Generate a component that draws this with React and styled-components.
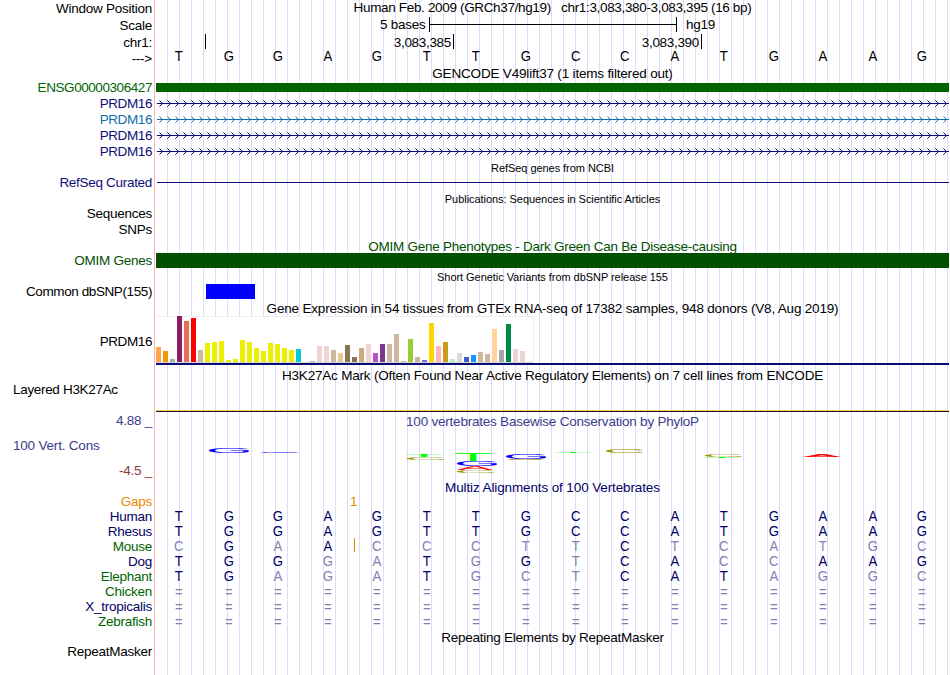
import React from 'react';
import styled, { createGlobalStyle } from 'styled-components';

const GlobalStyle = createGlobalStyle`
  body {
    margin: 0;
    background: #fff;
  }
`

const Browser = styled.div`
  width: 949px;
  height: 675px;
  overflow: hidden;
  font-family: "Liberation Sans", Arial, sans-serif;
  font-size: 13.5px;
  letter-spacing: -0.25px;
  line-height: 15px;
  color: #000;
  white-space: pre;
`

const Row = styled.div`
  display: grid;
  grid-template-columns: 154px 1px 1fr;
  height: ${p => p.$h}px;
`

const Side = styled.div`
  display: flex;
  flex-direction: column;
  padding: ${p => p.$top || 0}px 2px 0 13px;
`

const Label = styled.div`
  color: ${p => p.$color || '#000'};
  align-self: ${p => (p.$left ? 'flex-start' : 'flex-end')};
  margin-bottom: ${p => p.$gap || 0}px;
  letter-spacing: ${p => p.$spacing || -0.25}px;
`

const Divider = styled.div`
  background: #ffb4b4;
`

const Data = styled.div`
  margin-left: 1px;
  min-width: 0;
  background-image: linear-gradient(to right, #dcdcff 1px, transparent 1px);
  background-size: 12px 100%;
  background-position: 11px 0;
`

const Title = styled.div`
  text-align: center;
  color: ${p => p.$color || '#000'};
  padding-top: ${p => p.$top || 0}px;
  letter-spacing: ${p => p.$spacing || -0.25}px;
`

const SmallTitle = styled(Title)`
  padding-top: 1px;
  font-size: 11px;
  letter-spacing: -0.05px;
`

const Bar = styled.div`
  height: ${p => p.$h}px;
  width: ${p => (p.$w ? p.$w + 'px' : 'auto')};
  margin-left: ${p => p.$left || 0}px;
  background: ${p => p.$color};
`

const GeneBar = styled.div`
  padding-top: 3px;
`

const ScaleRow = styled.div`
  display: flex;
  padding-left: 224px;
`

const ScaleText = styled.div`
  width: 49px;
`

const ScaleBar = styled.div`
  display: flex;
  align-items: center;
  width: 246px;
  height: 15px;
  margin-right: 9px;
  border: solid #000;
  border-width: 0 1px;

  &::before {
    content: '';
    flex: 1;
    height: 1px;
    background: #000;
  }
`

const Ruler = styled.div`
  display: flex;
`

const Tick = styled.div`
  width: ${p => p.$w}px;
  height: 15px;
  padding: 1px 2px 0 0;
  box-sizing: border-box;
  border-right: 1px solid #000;
  text-align: right;
  letter-spacing: -0.32px;
`

const Bases = styled.div`
  display: grid;
  grid-template-columns: repeat(16, 1fr);
  margin: 0 2px 0 -2px;
  padding-top: ${p => p.$top || 0}px;
  text-align: center;
  letter-spacing: 0;
`

const Base = styled.span`
  color: ${p => p.$color};
  font-size: 14px;
  transform: scaleX(0.94);
`

const Gap = styled.div`
  width: 4px;
  margin-left: 194px;
  color: #e68a00;
`

const MouseRow = styled.div`
  position: relative;
`

const Insert = styled.div`
  position: absolute;
  left: 198px;
  top: -1px;
  width: 1px;
  height: 14px;
  background: #e68a00;
`

const Drawing = styled.svg`
  display: block;
`

const Histogram = styled.div`
  display: flex;
  align-items: flex-end;
  gap: 2px;
  width: 378px;
  height: 47px;
  box-sizing: border-box;
  background: #fff;
  border: solid #eee;
  border-width: 1px 1px 0 0;
  border-bottom: 1px solid #d3d3d3;
`

const Expression = styled.div`
  padding-top: 1px;
`

const Tissue = styled.div`
  flex: none;
  width: 5px;
  background: ${p => p.$color};
`

const navy = '#0c0c78';
const blue = '#0c6eaa';
const alignNavy = '#000064';
const pale = '#8080b2';
const green = '#006400';
const omim = '#005000';

const tissues = [
  [15, '#ffa54f'], [11, '#ee9a00'], [3, '#8fbc8f'], [46, '#8b1c62'], [41, '#ee6a50'], [44, '#ff0000'],
  [12, '#cdb79e'], [19, '#eeee00'], [20, '#eeee00'], [21, '#eeee00'], [2, '#eeee00'], [3, '#eeee00'],
  [22, '#eeee00'], [20, '#eeee00'], [14, '#eeee00'], [11, '#eeee00'], [19, '#eeee00'], [18, '#eeee00'],
  [14, '#eeee00'], [12, '#eeee00'], [13, '#00cdcd'], [0, '#ee82ee'], [1, '#9ac0cd'], [16, '#eed5d2'],
  [16, '#eed5d2'], [12, '#cdb79e'], [9, '#eec591'], [17, '#8b7355'], [5, '#8b7355'], [14, '#cdaa7d'],
  [18, '#eed5d2'], [9, '#b452cd'], [18, '#7a378b'], [18, '#cdb79e'], [28, '#cdb79e'], [1, '#cdb79e'],
  [23, '#9acd32'], [5, '#cdb79e'], [2, '#7a67ee'], [39, '#ffd700'], [16, '#ffb6c1'], [20, '#cd9b1d'],
  [3, '#b4eeb4'], [9, '#d9d9d9'], [5, '#3a5fcd'], [7, '#1e90ff'], [10, '#cdb79e'], [8, '#cdb79e'],
  [33, '#ffd39b'], [12, '#a6a6a6'], [38, '#008b45'], [13, '#eed5d2'], [11, '#eed5d2'], [0, '#ff00ff'],
];

const human = 'TGGAGTTGCCATGAAG';
const species = [
  ['Human', alignNavy, human],
  ['Rhesus', alignNavy, human],
  ['Mouse', green, 'CGAACCCTTCTCATGC'],
  ['Dog', alignNavy, 'TGGGATGGTCACCAAG'],
  ['Elephant', green, 'TGAGATGCTCATAGGC'],
  ['Chicken', green, '================'],
  ['X_tropicalis', alignNavy, '================'],
  ['Zebrafish', green, '================'],
];

// glyph box at font-size 100: left, width, height, descent
const glyphs = {
  G: [5, 68, 72, 1],
  C: [5, 64, 72, 1],
  T: [2, 57, 69, 0],
  A: [0, 67, 69, 0],
};

const colors = { G: '#0000ff', C: '#a09600', T: '#00ff00', A: '#ff0000' };

// letter, x, y, width, height
const logo = [
  ['G', 53, 35, 41, 4.6],
  ['G', 104, 39, 40, 0.8],
  ['T', 250, 41, 36, 3],
  ['C', 251, 44, 38, 3],
  ['T', 299, 41, 36, 7],
  ['G', 301, 48, 41, 5],
  ['A', 301, 53, 36, 4],
  ['C', 301, 57, 38, 3],
  ['G', 350, 41, 41, 5],
  ['A', 351, 46, 36, 0.6],
  ['C', 351, 46, 38, 1.3],
  ['T', 399, 39, 36, 1],
  ['C', 450, 36, 38, 4],
  ['C', 549, 41, 38, 3],
  ['T', 547, 44, 38, 0.8],
  ['A', 647, 41, 38, 3],
];

function Track({ h, label, color, top, left, spacing, children }) {
  return (
    <Row $h={h}>
      <Side $top={top}>
        {label && <Label $color={color} $left={left} $spacing={spacing}>{label}</Label>}
      </Side>
      <Divider />
      <Data>{children}</Data>
    </Row>
  );
}

function Intron({ id, color }) {
  return (
    <Drawing width="793" height="16" shapeRendering="crispEdges">
      <defs>
        <pattern id={id} x="3" y="0" width="8" height="16" patternUnits="userSpaceOnUse">
          <g fill={color}>
            <rect x="3" y="7" width="1" height="1" />
            <rect x="2" y="6" width="1" height="1" />
            <rect x="2" y="8" width="1" height="1" />
            <rect x="1" y="5" width="1" height="1" />
            <rect x="1" y="9" width="1" height="1" />
            <rect x="0" y="4" width="1" height="1" opacity="0.5" />
            <rect x="0" y="10" width="1" height="1" opacity="0.5" />
          </g>
        </pattern>
      </defs>
      <rect x="1" y="7" width="792" height="1" fill={color} />
      <rect x="3" width="790" height="16" fill={`url(#${id})`} />
    </Drawing>
  );
}

function Conservation() {
  return (
    <Drawing width="793" height="51" fontFamily="Liberation Sans" fontSize="100" letterSpacing="0">
      {logo.map(([ch, x, y, w, h], i) => {
        const [left, width, height, descent] = glyphs[ch];
        const sx = w / width;
        const sy = h / (height + descent);
        return (
          <text
            key={i}
            fill={colors[ch]}
            stroke={h >= 3 ? colors[ch] : 'none'}
            strokeWidth="0.3"
            vectorEffect="non-scaling-stroke"
            transform={`translate(${x - left * sx} ${y - 16 + height * sy}) scale(${sx} ${sy})`}
          >
            {ch}
          </text>
        );
      })}
    </Drawing>
  );
}

function Alignment({ seq }) {
  return (
    <Bases $top={seq[0] === '=' ? 1 : 0}>
      {seq.split('').map((b, i) => (
        <Base key={i} $color={b === human[i] ? alignNavy : pale}>{b}</Base>
      ))}
    </Bases>
  );
}

function App() {
  return (
    <Browser>
      <GlobalStyle />
      <Track h={17} label="Window Position" top={1}>
        <Title $spacing={-0.34}>{'Human Feb. 2009 (GRCh37/hg19)   chr1:3,083,380-3,083,395 (16 bp)'}</Title>
      </Track>
      <Track h={17} label="Scale" top={1}>
        <ScaleRow>
          <ScaleText>5 bases</ScaleText>
          <ScaleBar />
          hg19
        </ScaleRow>
      </Track>
      <Track h={15} label="chr1:" top={1}>
        <Ruler>
          <Tick $w={50} />
          <Tick $w={248}>3,083,385</Tick>
          <Tick $w={248}>3,083,390</Tick>
        </Ruler>
      </Track>
      <Track h={17} label="--->" top={2}>
        <Bases>{human.split('').map((b, i) => <Base key={i}>{b}</Base>)}</Bases>
      </Track>
      <Track h={14}><Title $spacing={-0.18}>GENCODE V49lift37 (1 items filtered out)</Title></Track>
      <Track h={16} label="ENSG00000306427" color={green} spacing={-0.43}>
        <GeneBar><Bar $h={9} $color={green} /></GeneBar>
      </Track>
      <Track h={16} label="PRDM16" color={navy} spacing={-0.4}><Intron id="tx1" color={navy} /></Track>
      <Track h={16} label="PRDM16" color={blue} spacing={-0.4}><Intron id="tx2" color={blue} /></Track>
      <Track h={16} label="PRDM16" color={navy} spacing={-0.4}><Intron id="tx3" color={navy} /></Track>
      <Track h={16} label="PRDM16" color={navy} spacing={-0.4}><Intron id="tx4" color={navy} /></Track>
      <Track h={15}><SmallTitle>RefSeq genes from NCBI</SmallTitle></Track>
      <Track h={16} label="RefSeq Curated" color={navy} spacing={-0.3}>
        <Drawing width="793" height="16"><rect x="1" y="7" width="792" height="1" fill={navy} /></Drawing>
      </Track>
      <Track h={15}><SmallTitle>Publications: Sequences in Scientific Articles</SmallTitle></Track>
      <Track h={16} label="Sequences" />
      <Track h={16} label="SNPs" />
      <Track h={15}><Title $color={omim} $top={1}>OMIM Gene Phenotypes - Dark Green Can Be Disease-causing</Title></Track>
      <Track h={16} label="OMIM Genes" color={omim}><Bar $h={15} $color={omim} /></Track>
      <Track h={15}><SmallTitle>Short Genetic Variants from dbSNP release 155</SmallTitle></Track>
      <Track h={16} label="Common dbSNP(155)" spacing={-0.4}>
        <Bar $h={15} $w={49} $left={50} $color="#0000ff" />
      </Track>
      <Track h={15}>
        <Title $top={1} $spacing={-0.19}>
          Gene Expression in 54 tissues from GTEx RNA-seq of 17382 samples, 948 donors (V8, Aug 2019)
        </Title>
      </Track>
      <Track h={52} label="PRDM16" top={19} spacing={-0.4}>
        <Expression>
          <Histogram>
            {tissues.map(([h, color], i) => <Tissue key={i} $color={color} style={{ height: h }} />)}
          </Histogram>
          <Bar $h={2} $color={navy} />
        </Expression>
      </Track>
      <Track h={15}>
        <Title $top={1} $spacing={-0.2}>
          H3K27Ac Mark (Often Found Near Active Regulatory Elements) on 7 cell lines from ENCODE
        </Title>
      </Track>
      <Track h={31} label="Layered H3K27Ac" left spacing={-0.32}>
        <Drawing width="793" height="31" shapeRendering="crispEdges">
          <rect y="28" width="793" height="1" fill="#ffc85a" />
          <rect y="29" width="793" height="1" fill="#28101e" />
        </Drawing>
      </Track>
      <Row $h={67}>
        <Side>
          <Label $color="#3c3c8c" $gap={10}>4.88 _</Label>
          <Label $color="#3c3c8c" $gap={10} $left $spacing={-0.2}>100 Vert. Cons</Label>
          <Label $color="#8c3c3c">-4.5 _</Label>
        </Side>
        <Divider />
        <Data>
          <Title $color="#3c3c8c" $top={1} $spacing={-0.22}>100 vertebrates Basewise Conservation by PhyloP</Title>
          <Conservation />
        </Data>
      </Row>
      <Track h={14}><Title $color={alignNavy} $spacing={-0.12}>Multiz Alignments of 100 Vertebrates</Title></Track>
      <Track h={15} label="Gaps" color="#e68a00"><Gap>1</Gap></Track>
      {species.map(([name, color, seq]) => (
        <Track key={name} h={15} label={name} color={color}>
          {name === 'Mouse' ? (
            <MouseRow><Alignment seq={seq} /><Insert /></MouseRow>
          ) : (
            <Alignment seq={seq} />
          )}
        </Track>
      ))}
      <Track h={15}><Title $top={1}>Repeating Elements by RepeatMasker</Title></Track>
      <Track h={31} label="RepeatMasker" />
    </Browser>
  );
}

export default App;
